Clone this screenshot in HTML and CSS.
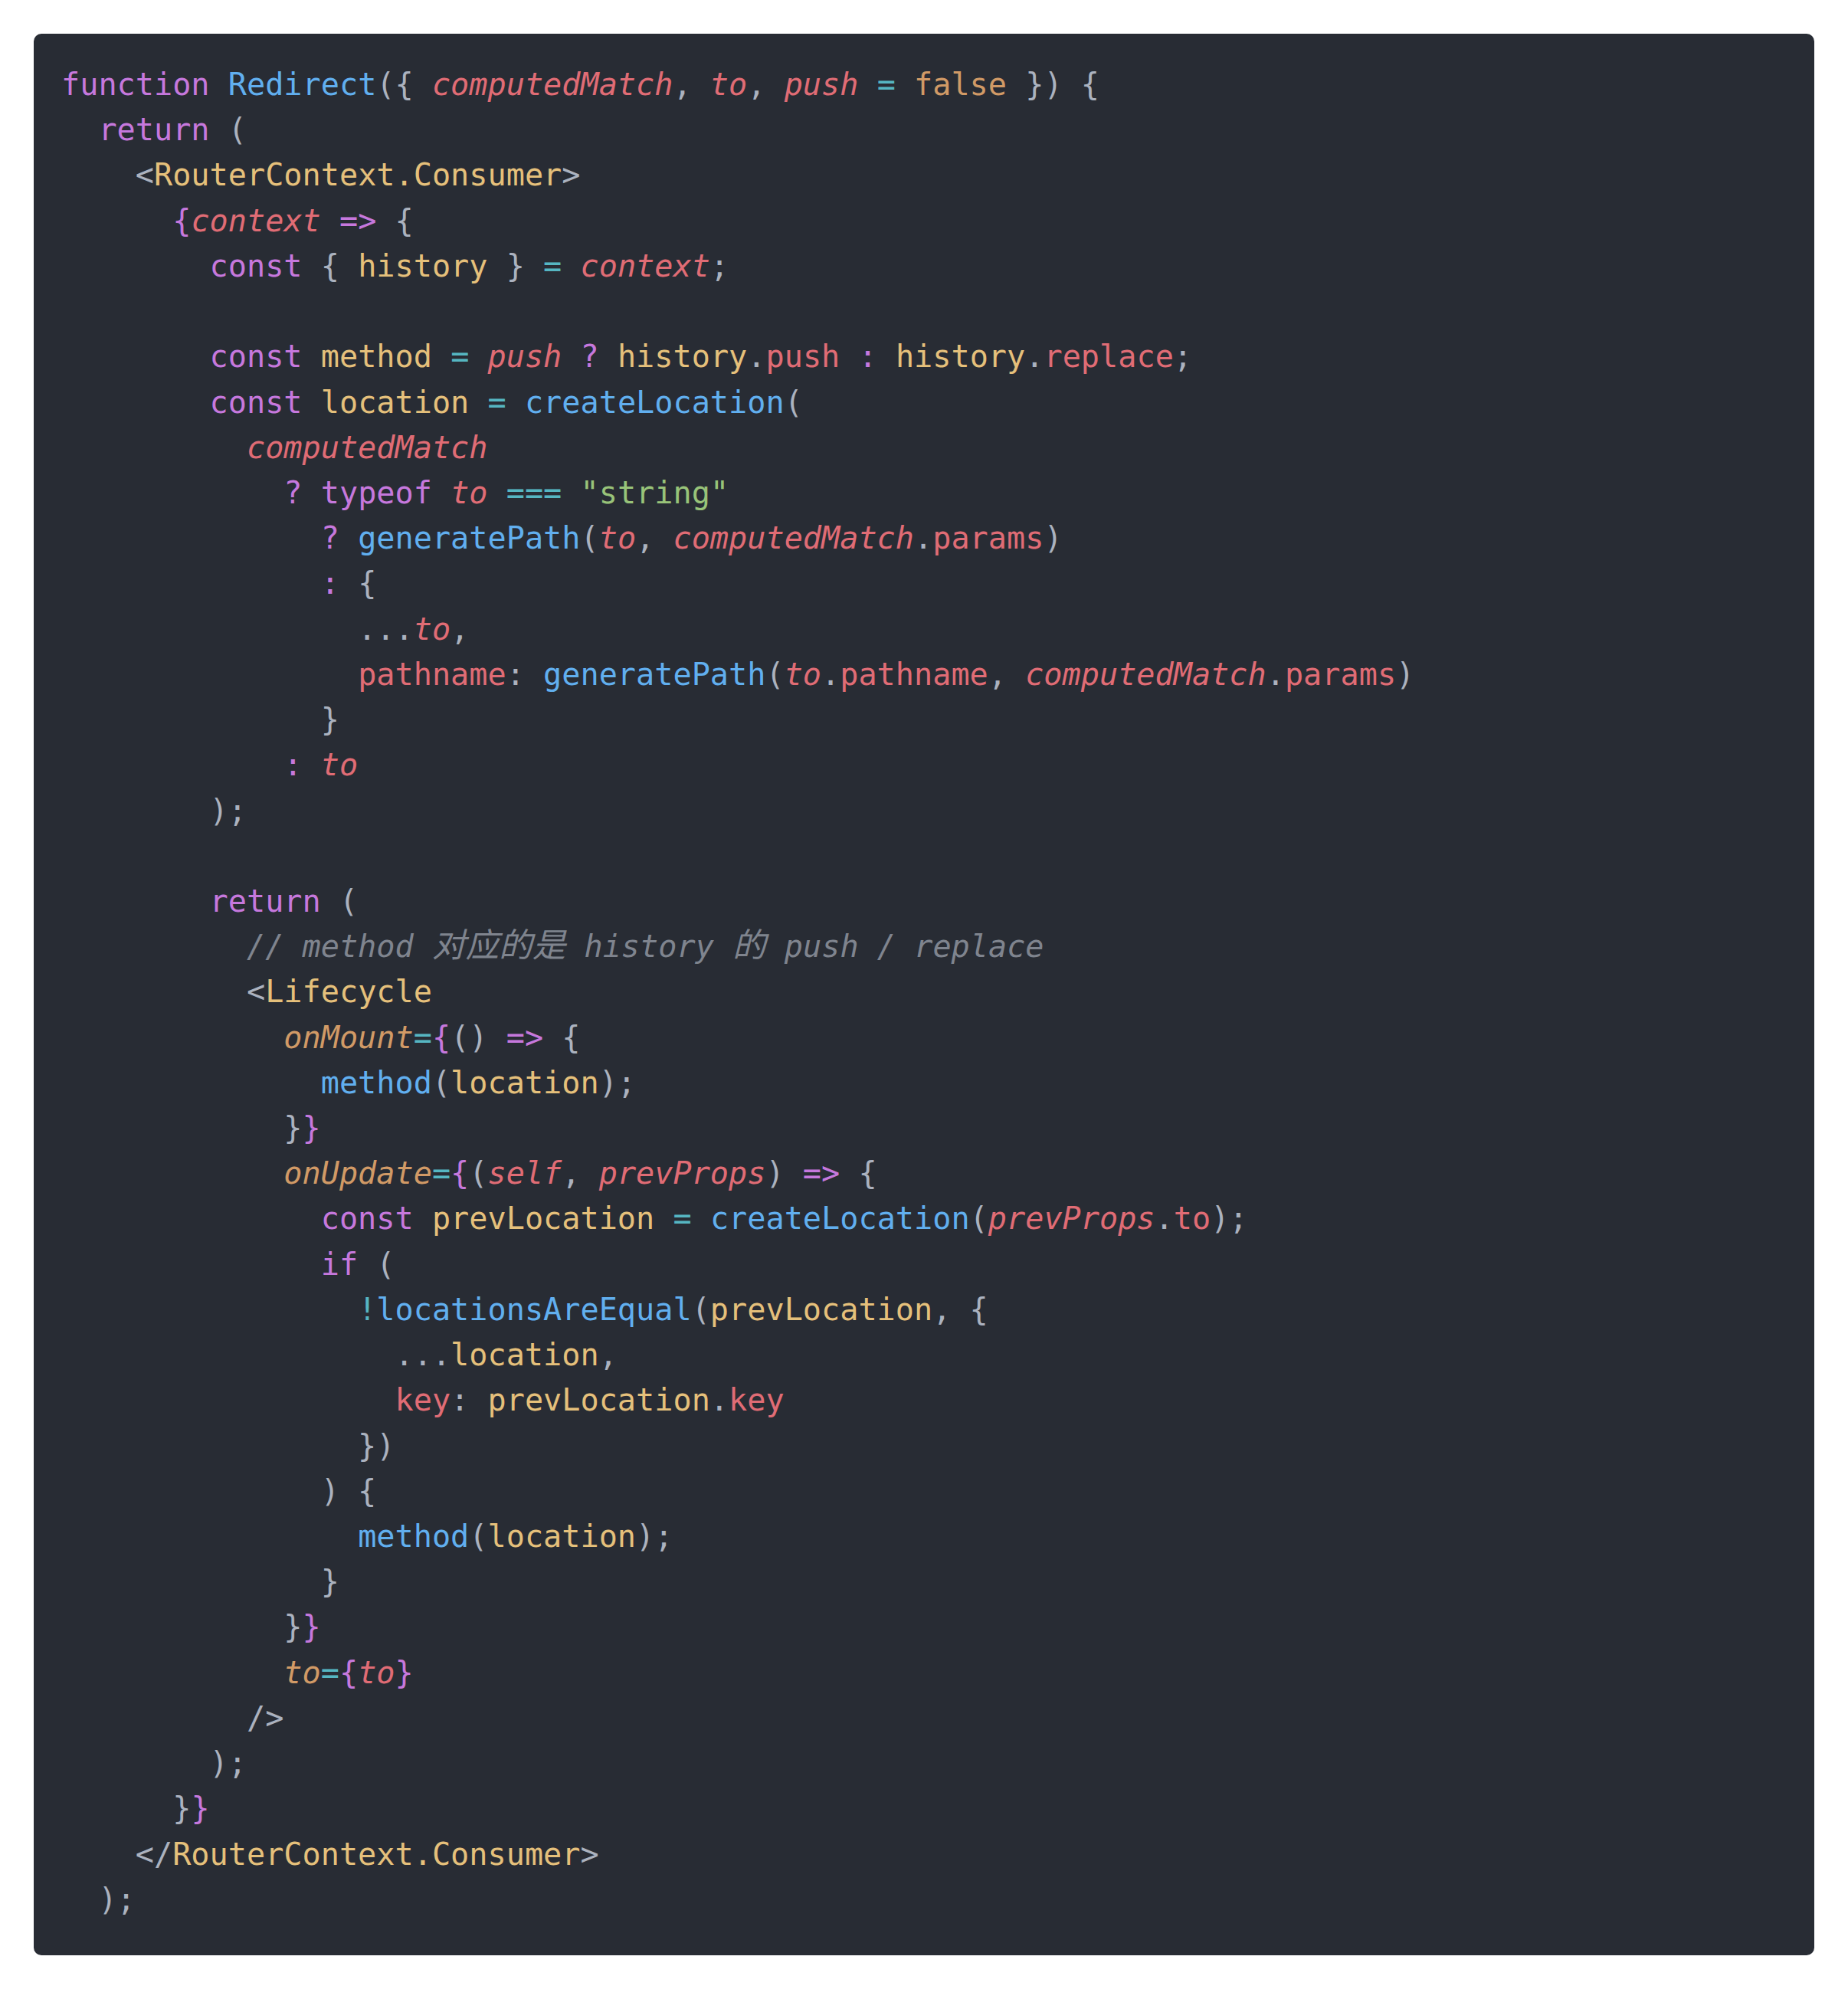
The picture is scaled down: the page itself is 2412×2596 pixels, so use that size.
FILE: index.html
```html
<!doctype html>
<html lang="en">
  <head>
    <meta charset="UTF-8" />
    <title>Redirect</title>
    <link rel="stylesheet" href="styles.css">
  </head>
  <body>
    <pre class="code-block"><code><span class="k">function</span> <span class="fn">Redirect</span>({ <span class="pi">computedMatch</span>, <span class="pi">to</span>, <span class="pi">push</span> <span class="op">=</span> <span class="num">false</span> }) {
  <span class="k">return</span> (
    &lt;<span class="tag">RouterContext.Consumer</span>&gt;
      <span class="k">{</span><span class="pi">context</span> <span class="k">=&gt;</span> {
        <span class="k">const</span> { <span class="var">history</span> } <span class="op">=</span> <span class="pi">context</span>;

        <span class="k">const</span> <span class="var">method</span> <span class="op">=</span> <span class="pi">push</span> <span class="k">?</span> <span class="var">history</span>.<span class="prop">push</span> <span class="k">:</span> <span class="var">history</span>.<span class="prop">replace</span>;
        <span class="k">const</span> <span class="var">location</span> <span class="op">=</span> <span class="fn">createLocation</span>(
          <span class="pi">computedMatch</span>
            <span class="k">?</span> <span class="k">typeof</span> <span class="pi">to</span> <span class="op">===</span> <span class="str">"string"</span>
              <span class="k">?</span> <span class="fn">generatePath</span>(<span class="pi">to</span>, <span class="pi">computedMatch</span>.<span class="prop">params</span>)
              <span class="k">:</span> {
                ...<span class="pi">to</span>,
                <span class="prop">pathname</span>: <span class="fn">generatePath</span>(<span class="pi">to</span>.<span class="prop">pathname</span>, <span class="pi">computedMatch</span>.<span class="prop">params</span>)
              }
            <span class="k">:</span> <span class="pi">to</span>
        );

        <span class="k">return</span> (
          <span class="cm">// method <span class="cjk">对应的是</span> history <span class="cjk">的</span> push / replace</span>
          &lt;<span class="tag">Lifecycle</span>
            <span class="attr">onMount</span><span class="op">=</span><span class="k">{</span>() <span class="k">=&gt;</span> {
              <span class="fn">method</span>(<span class="var">location</span>);
            }<span class="k">}</span>
            <span class="attr">onUpdate</span><span class="op">=</span><span class="k">{</span>(<span class="pi">self</span>, <span class="pi">prevProps</span>) <span class="k">=&gt;</span> {
              <span class="k">const</span> <span class="var">prevLocation</span> <span class="op">=</span> <span class="fn">createLocation</span>(<span class="pi">prevProps</span>.<span class="prop">to</span>);
              <span class="k">if</span> (
                <span class="op">!</span><span class="fn">locationsAreEqual</span>(<span class="var">prevLocation</span>, {
                  ...<span class="var">location</span>,
                  <span class="prop">key</span>: <span class="var">prevLocation</span>.<span class="prop">key</span>
                })
              ) {
                <span class="fn">method</span>(<span class="var">location</span>);
              }
            }<span class="k">}</span>
            <span class="attr">to</span><span class="op">=</span><span class="k">{</span><span class="pi">to</span><span class="k">}</span>
          /&gt;
        );
      }<span class="k">}</span>
    &lt;/<span class="tag">RouterContext.Consumer</span>&gt;
  );</code></pre>
  </body>
</html>
```

FILE: styles.css
```css
/* Page */
body {
  margin: 44px;
  background: #ffffff;
}

/* Code block */
.code-block {
  margin: 0;
  padding: 37px 38px 43px 36px;
  background: #282c34;
  border-radius: 10px;
  color: #abb2bf;
  font-family: 'DejaVu Sans Mono', 'Noto Sans CJK SC', monospace;
  font-size: 40.2px;
  line-height: 59.22px;
  white-space: pre;
  overflow: hidden;
}

.code-block code {
  font-family: inherit;
}

/* Tokens */
.k {
  color: #c678dd;
}

.fn {
  color: #61afef;
}

.pi {
  color: #e06c75;
  font-style: italic;
}

.prop {
  color: #e06c75;
}

.var,
.tag {
  color: #e5c07b;
}

.num {
  color: #d19a66;
}

.attr {
  color: #d19a66;
  font-style: italic;
}

.op {
  color: #56b6c2;
}

.str {
  color: #98c379;
}

.cm {
  color: #7f848e;
  font-style: italic;
}

.cjk {
  font-family: 'Noto Sans CJK SC', sans-serif;
  font-size: 43.6px;
  line-height: 1;
}
```
